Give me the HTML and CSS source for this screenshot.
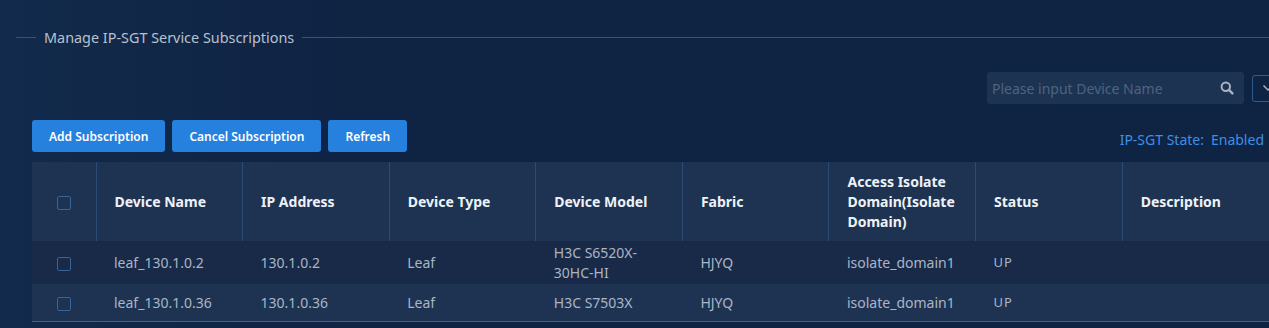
FILE: index.html
```html
<!DOCTYPE html>
<html>
<head>
	<meta charset="utf-8">
	<title>Manage IP-SGT Service Subscriptions</title>
	<link rel="stylesheet" href="styles.css">
</head>
<body>
	<div class="page">
		<div class="legend">
			<span class="legend_line short"></span>
			<span class="legend_text">Manage IP-SGT Service Subscriptions</span>
			<span class="legend_line long"></span>
		</div>

		<div class="content">
			<div class="search_row">
				<div class="search">
					<input type="text" placeholder="Please input Device Name">
					<svg class="search_icon" width="14" height="14" viewBox="0 0 14 14">
						<circle cx="5.8" cy="5.8" r="4.2" fill="none" stroke="#a9b3c2" stroke-width="2"/>
						<path d="M8.9 8.9 L12.4 12.4" stroke="#a9b3c2" stroke-width="2.4" stroke-linecap="round"/>
					</svg>
				</div>
				<div class="drop_btn">
					<svg width="12" height="8" viewBox="0 0 12 8">
						<path d="M1.5 1.5 L6 6 L10.5 1.5" fill="none" stroke="#a9b3c2" stroke-width="1.5"/>
					</svg>
				</div>
			</div>

			<div class="action_row">
				<div class="buttons">
					<button class="btn">Add Subscription</button>
					<button class="btn">Cancel Subscription</button>
					<button class="btn">Refresh</button>
				</div>
				<div class="state">IP-SGT State:<span class="state_value">Enabled</span></div>
			</div>

			<table class="grid">
				<colgroup>
					<col class="w_check">
					<col class="w_col">
					<col class="w_col">
					<col class="w_col">
					<col class="w_col">
					<col class="w_col">
					<col class="w_col">
					<col class="w_col">
					<col class="w_last">
				</colgroup>
				<thead>
					<tr>
						<th class="col_check"><span class="check"></span></th>
						<th>Device Name</th>
						<th>IP Address</th>
						<th>Device Type</th>
						<th>Device Model</th>
						<th>Fabric</th>
						<th>Access Isolate Domain(Isolate Domain)</th>
						<th>Status</th>
						<th>Description</th>
					</tr>
				</thead>
				<tbody>
					<tr class="odd">
						<td class="col_check"><span class="check"></span></td>
						<td>leaf_130.1.0.2</td>
						<td>130.1.0.2</td>
						<td>Leaf</td>
						<td>H3C S6520X-30HC-HI</td>
						<td>HJYQ</td>
						<td>isolate_domain1</td>
						<td class="status">UP</td>
						<td></td>
					</tr>
					<tr class="even">
						<td class="col_check"><span class="check"></span></td>
						<td>leaf_130.1.0.36</td>
						<td>130.1.0.36</td>
						<td>Leaf</td>
						<td>H3C S7503X</td>
						<td>HJYQ</td>
						<td>isolate_domain1</td>
						<td class="status">UP</td>
						<td></td>
					</tr>
				</tbody>
			</table>
		</div>
	</div>
</body>
</html>
```

FILE: styles.css
```css
* {
	margin: 0;
	padding: 0;
	box-sizing: border-box;
}
html, body {
	width: 100%;
	height: 100%;
	overflow: hidden;
}
body {
	background: linear-gradient(90deg, #122a4b 0%, #0f2343 30%, #0f2343 100%);
	font-family: "Noto Sans", "Open Sans", sans-serif;
	font-size: 14px;
	color: #aab5c6;
}
.page {
	width: 1300px;
	padding-top: 27px;
}
.legend {
	display: flex;
	align-items: center;
	height: 20px;
	padding-left: 16px;
}
.legend_line {
	height: 1px;
	background-color: #34547e;
}
.legend_line.short {
	width: 20px;
	margin-right: 8px;
}
.legend_line.long {
	flex: 1;
	margin-left: 8px;
}
.legend_text {
	color: #b7c1d0;
	font-size: 14.4px;
	white-space: nowrap;
}
.content {
	margin-left: 32px;
	width: 1252px;
}
.search_row {
	display: flex;
	justify-content: flex-end;
	align-items: center;
	gap: 8px;
	margin-top: 25px;
	height: 32px;
}
.search {
	position: relative;
	width: 257px;
	height: 32px;
}
.search input {
	width: 100%;
	height: 100%;
	border: none;
	outline: none;
	border-radius: 3px;
	background-color: #1d3352;
	padding: 0 30px 0 5px;
	font-family: inherit;
	font-size: 14px;
	color: #aab5c6;
}
.search input::placeholder {
	color: #4e6383;
}
.search_icon {
	position: absolute;
	right: 10px;
	top: 9px;
}
.drop_btn {
	width: 32px;
	height: 27px;
	border: 1px solid #2e5c92;
	border-radius: 3px;
	display: flex;
	align-items: center;
	justify-content: center;
}
.action_row {
	display: flex;
	justify-content: space-between;
	align-items: flex-end;
	margin-top: 16px;
	height: 32px;
}
.buttons {
	display: flex;
	gap: 7px;
}
.btn {
	height: 32px;
	padding: 0 17px;
	border: none;
	border-radius: 3px;
	background-color: #2680dd;
	color: #ffffff;
	font-family: inherit;
	font-size: 12px;
	font-weight: 600;
}
.state {
	color: #3d8fe7;
	font-size: 14px;
	margin-right: 20px;
	margin-bottom: 3px;
	white-space: nowrap;
}
.state_value {
	margin-left: 7px;
}
.grid {
	margin-top: 10px;
	border-collapse: collapse;
	table-layout: fixed;
	width: 1272px;
}
.w_check {
	width: 64px;
}
.w_col {
	width: 146.6px;
}
.w_last {
	width: 181.8px;
}
.grid th {
	height: 79px;
	background-color: #1e3352;
	color: #eef2f7;
	font-weight: 700;
	text-align: left;
	line-height: 20px;
	padding: 0 18px;
	border-left: 1px solid #2c4a73;
}
.grid th.col_check, .grid td.col_check {
	text-align: center;
	padding: 0;
}
.grid th.col_check {
	border-left: none;
}
.grid td {
	height: 37px;
	padding: 2px 18px;
	line-height: 19.5px;
	color: #aab5c6;
}
.grid td.status {
	font-size: 13px;
	letter-spacing: 1px;
}
.grid tr.odd td {
	background-color: #182a47;
}
.grid tr.even td {
	background-color: #1e3352;
	border-bottom: 1px solid #3a6499;
}
.check {
	display: inline-block;
	width: 14px;
	height: 14px;
	border: 1px solid #3a6499;
	border-radius: 2px;
	vertical-align: middle;
}
```
